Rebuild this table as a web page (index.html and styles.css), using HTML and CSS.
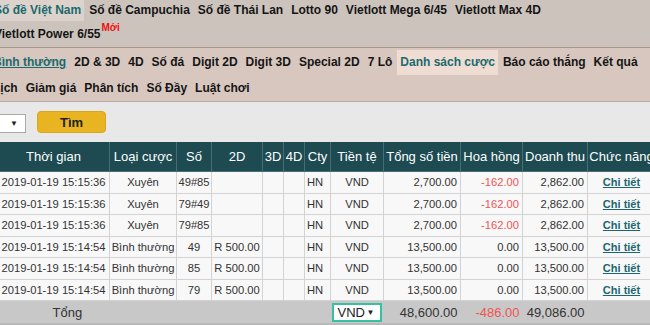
FILE: index.html
```html
<!DOCTYPE html>
<html lang="vi">
<head>
<meta charset="utf-8">
<title>Danh sách cược</title>
<link rel="stylesheet" href="styles.css">
</head>
<body>
<div class="viewport">
  <div class="page">
    <nav class="topnav">
      <a class="nav-item active" href="#">Số đề Việt Nam</a>
      <a class="nav-item" href="#">Số đề Campuchia</a>
      <a class="nav-item" href="#">Số đề Thái Lan</a>
      <a class="nav-item" href="#">Lotto 90</a>
      <a class="nav-item" href="#">Vietlott Mega 6/45</a>
      <a class="nav-item" href="#">Vietlott Max 4D</a>
      <a class="nav-item" href="#">Vietlott Power 6/55<sup class="new">Mới</sup></a>
    </nav>
    <nav class="subnav">
      <a class="sub-item link" href="#">Bình thường</a>
      <a class="sub-item" href="#">2D &amp; 3D</a>
      <a class="sub-item" href="#">4D</a>
      <a class="sub-item" href="#">Số đá</a>
      <a class="sub-item" href="#">Digit 2D</a>
      <a class="sub-item" href="#">Digit 3D</a>
      <a class="sub-item" href="#">Special 2D</a>
      <a class="sub-item" href="#">7 Lô</a>
      <a class="sub-item active" href="#">Danh sách cược</a>
      <a class="sub-item" href="#">Báo cáo thắng</a>
      <a class="sub-item" href="#">Kết quả</a>
      <a class="sub-item" href="#">Lịch</a>
      <a class="sub-item" href="#">Giảm giá</a>
      <a class="sub-item" href="#">Phân tích</a>
      <a class="sub-item" href="#">Số Đầy</a>
      <a class="sub-item" href="#">Luật chơi</a>
    </nav>
    <div class="filter">
      <div class="select small"><span class="arrow">▼</span></div>
      <button class="btn-search" type="button">Tìm</button>
    </div>
    <table class="bets">
      <colgroup>
        <col class="c-time"><col class="c-type"><col class="c-num"><col class="c-2d"><col class="c-3d"><col class="c-4d"><col class="c-cty"><col class="c-cur"><col class="c-total"><col class="c-comm"><col class="c-rev"><col class="c-act">
      </colgroup>
      <thead>
        <tr>
          <th>Thời gian</th><th>Loại cược</th><th>Số</th><th>2D</th><th>3D</th><th>4D</th><th>Cty</th><th>Tiền tệ</th><th>Tổng số tiền</th><th>Hoa hồng</th><th>Doanh thu</th><th>Chức năng</th>
        </tr>
      </thead>
      <tbody>
        <tr><td>2019-01-19 15:15:36</td><td>Xuyên</td><td>49#85</td><td></td><td></td><td></td><td class="left">HN</td><td>VND</td><td class="num">2,700.00</td><td class="num neg">-162.00</td><td class="num">2,862.00</td><td><a class="detail" href="#">Chi tiết</a></td></tr>
        <tr><td>2019-01-19 15:15:36</td><td>Xuyên</td><td>79#49</td><td></td><td></td><td></td><td class="left">HN</td><td>VND</td><td class="num">2,700.00</td><td class="num neg">-162.00</td><td class="num">2,862.00</td><td><a class="detail" href="#">Chi tiết</a></td></tr>
        <tr><td>2019-01-19 15:15:36</td><td>Xuyên</td><td>79#85</td><td></td><td></td><td></td><td class="left">HN</td><td>VND</td><td class="num">2,700.00</td><td class="num neg">-162.00</td><td class="num">2,862.00</td><td><a class="detail" href="#">Chi tiết</a></td></tr>
        <tr><td>2019-01-19 15:14:54</td><td>Bình thường</td><td>49</td><td>R 500.00</td><td></td><td></td><td class="left">HN</td><td>VND</td><td class="num">13,500.00</td><td class="num">0.00</td><td class="num">13,500.00</td><td><a class="detail" href="#">Chi tiết</a></td></tr>
        <tr><td>2019-01-19 15:14:54</td><td>Bình thường</td><td>85</td><td>R 500.00</td><td></td><td></td><td class="left">HN</td><td>VND</td><td class="num">13,500.00</td><td class="num">0.00</td><td class="num">13,500.00</td><td><a class="detail" href="#">Chi tiết</a></td></tr>
        <tr><td>2019-01-19 15:14:54</td><td>Bình thường</td><td>79</td><td>R 500.00</td><td></td><td></td><td class="left">HN</td><td>VND</td><td class="num">13,500.00</td><td class="num">0.00</td><td class="num">13,500.00</td><td><a class="detail" href="#">Chi tiết</a></td></tr>
      </tbody>
      <tfoot>
        <tr>
          <td class="total-label" colspan="7">Tổng</td>
          <td class="cur-cell"><div class="select cur">VND <span class="arrow">▼</span></div></td>
          <td class="num">48,600.00</td>
          <td class="num neg">-486.00</td>
          <td class="num">49,086.00</td>
          <td></td>
        </tr>
      </tfoot>
    </table>
    <div class="bottom-bar"></div>
  </div>
</div>
</body>
</html>
```

FILE: styles.css
```css
html, body {
  margin: 0;
  padding: 0;
  background: #e8e8e8;
  font-family: "Liberation Sans", Arial, sans-serif;
}

.viewport {
  width: 650px;
  height: 325px;
  overflow: hidden;
}

.page {
  width: 660px;
  margin-left: -10px;
}

/* top navigation */
.topnav {
  display: flex;
  flex-wrap: wrap;
  column-gap: 2px;
  row-gap: 3px;
  padding: 0 0 2px 1px;
  background: #ccc3bd;
  border-bottom: 1px solid #a8968a;
}

.nav-item {
  display: block;
  padding: 0 3px;
  line-height: 21px;
  font-size: 12px;
  font-weight: bold;
  color: #151515;
  text-decoration: none;
}

.nav-item.active {
  background: #ddd3cc;
  color: #1b6a6e;
}

.new {
  font-size: 10px;
  color: #ee1111;
  position: relative;
  top: -2px;
  vertical-align: super;
  line-height: 0;
  margin-left: 1px;
}

/* sub navigation */
.subnav {
  display: flex;
  flex-wrap: wrap;
  column-gap: 2px;
  row-gap: 1px;
  padding: 2px 0 0 0;
  background: #d7c7bf;
  border-bottom: 1px solid #bcaea6;
}

.sub-item {
  display: block;
  padding: 0 3px;
  line-height: 25px;
  font-size: 12px;
  font-weight: bold;
  color: #151515;
  text-decoration: none;
}

.sub-item.link {
  color: #1b6a6e;
  text-decoration: underline;
}

.sub-item.active {
  background: #efddd4;
  color: #1b6a6e;
}

/* filter */
.filter {
  display: flex;
  align-items: flex-end;
  gap: 11px;
  height: 31px;
  padding-bottom: 9px;
  background: #e8e8e8;
}

.select {
  display: flex;
  align-items: center;
  justify-content: flex-end;
  background: #fff;
  border: 1px solid #a9a9a9;
  box-sizing: border-box;
  color: #222;
}

.select.small {
  width: 36px;
  height: 19px;
  padding-right: 7px;
}

.arrow {
  font-size: 8px;
  color: #222;
}

.btn-search {
  width: 69px;
  height: 22px;
  border: 1px solid #d9a51c;
  border-radius: 4px;
  background: #e8b422;
  font-family: "Liberation Sans", Arial, sans-serif;
  font-size: 13px;
  font-weight: bold;
  color: #222;
  padding: 0;
}

/* table */
.bets {
  margin-left: 7px;
  width: 658px;
  table-layout: fixed;
  border-collapse: collapse;
  font-size: 11.2px;
  color: #333;
}

.c-time { width: 112px; }
.c-type { width: 67px; }
.c-num { width: 35px; }
.c-2d { width: 51px; }
.c-3d { width: 21px; }
.c-4d { width: 21px; }
.c-cty { width: 26px; }
.c-cur { width: 53px; }
.c-total { width: 77px; }
.c-comm { width: 62px; }
.c-rev { width: 65px; }
.c-act { width: 68px; }

.bets th {
  height: 29px;
  padding: 0;
  background: #1d4b51;
  color: #fff;
  font-weight: normal;
  font-size: 13px;
  border: 1px solid #456f74;
  border-top: none;
  white-space: nowrap;
  overflow: hidden;
}

.bets tbody td {
  height: 20.5px;
  padding: 0;
  background: #f8f8f8;
  border: 1px solid #d3d3d3;
  text-align: center;
  white-space: nowrap;
  overflow: hidden;
}

.bets td.left {
  text-align: left;
  padding-left: 2px;
}

.bets td.num {
  text-align: right;
  padding-right: 3px;
}

.bets td.neg {
  color: #f05454;
}

.detail {
  color: #1b6670;
  font-size: 11px;
  font-weight: bold;
  text-decoration: underline;
}

.bets tfoot td {
  height: 22px;
  padding: 0 2px;
  background: #c8c8c8;
  font-size: 13px;
  color: #333;
  white-space: nowrap;
  border: none;
}

.bets tfoot td.num {
  padding-right: 3px;
}

.bets tfoot td.total-label {
  padding-left: 55px;
  text-align: left;
}

.bets tfoot td.cur-cell {
  padding: 0 1px;
}

.select.cur {
  width: 50px;
  height: 19px;
  padding: 0 5px 0 4px;
  justify-content: space-between;
  border: 2px solid #36c1a2;
  font-size: 13px;
}

.bottom-bar {
  height: 6px;
  background: #b9b9b9;
}
```
